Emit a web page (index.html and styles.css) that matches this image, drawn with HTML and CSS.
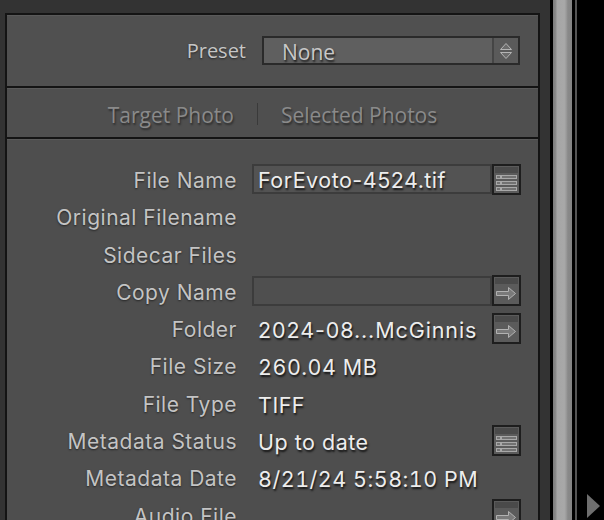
FILE: index.html
```html
<!DOCTYPE html>
<html>
<head>
<meta charset="utf-8">
<link rel="stylesheet" href="styles.css">
</head>
<body>
<div class="screen">
  <div class="main">
    <div class="panel">
      <div class="sec sec-preset">
        <span class="preset-label">Preset</span>
        <div class="dropdown">
          <span class="dd-text">None</span>
          <span class="dd-spin">
            <svg width="24" height="25" viewBox="0 0 24 25">
              <polygon points="12,5.5 6.5,11.5 17.5,11.5" fill="#6c6c6c" stroke="#b4b4b4" stroke-width="1"/>
              <polygon points="6.5,14.5 17.5,14.5 12,20.5" fill="#6c6c6c" stroke="#b4b4b4" stroke-width="1"/>
            </svg>
          </span>
        </div>
      </div>
      <div class="sec sec-target">
        <span class="tgt">Target Photo</span>
        <span class="vsep"></span>
        <span class="tgt">Selected Photos</span>
      </div>
      <div class="sec sec-meta">
        <div class="grid">
          <span class="lbl">File Name</span>
          <span class="val box">ForEvoto-4524.tif</span>
          <span class="btn">
            <svg width="25" height="27" viewBox="0 0 25 27">
              <rect x="1" y="1" width="23" height="6" fill="#4a4a4a"/>
              <rect x="2.5" y="9.5" width="4" height="3" fill="#727272" stroke="#a8a8a8"/>
              <rect x="7.5" y="9.5" width="15" height="3" fill="#727272" stroke="#a8a8a8"/>
              <rect x="2.5" y="15.5" width="4" height="3" fill="#727272" stroke="#a8a8a8"/>
              <rect x="7.5" y="15.5" width="15" height="3" fill="#727272" stroke="#a8a8a8"/>
              <rect x="2.5" y="21.5" width="4" height="3" fill="#727272" stroke="#a8a8a8"/>
              <rect x="7.5" y="21.5" width="15" height="3" fill="#727272" stroke="#a8a8a8"/>
            </svg>
          </span>

          <span class="lbl">Original Filename</span>
          <span class="val"></span>
          <span class="nobtn"></span>

          <span class="lbl">Sidecar Files</span>
          <span class="val"></span>
          <span class="nobtn"></span>

          <span class="lbl">Copy Name</span>
          <span class="val box empty"></span>
          <span class="btn">
            <svg width="25" height="27" viewBox="0 0 25 27">
              <rect x="1" y="1" width="23" height="6" fill="#4a4a4a"/>
              <polygon points="2.5,14.5 14.5,14.5 14.5,10.5 21.5,16.5 14.5,22.5 14.5,18.5 2.5,18.5" fill="#7a7a7a" stroke="#b2b2b2"/>
            </svg>
          </span>

          <span class="lbl">Folder</span>
          <span class="val wide">2024-08...McGinnis</span>
          <span class="btn">
            <svg width="25" height="27" viewBox="0 0 25 27">
              <rect x="1" y="1" width="23" height="6" fill="#4a4a4a"/>
              <polygon points="2.5,14.5 14.5,14.5 14.5,10.5 21.5,16.5 14.5,22.5 14.5,18.5 2.5,18.5" fill="#7a7a7a" stroke="#b2b2b2"/>
            </svg>
          </span>

          <span class="lbl">File Size</span>
          <span class="val num">260.04 MB</span>
          <span class="nobtn"></span>

          <span class="lbl">File Type</span>
          <span class="val">TIFF</span>
          <span class="nobtn"></span>

          <span class="lbl">Metadata Status</span>
          <span class="val">Up to date</span>
          <span class="btn">
            <svg width="25" height="27" viewBox="0 0 25 27">
              <rect x="1" y="1" width="23" height="6" fill="#4a4a4a"/>
              <rect x="2.5" y="9.5" width="4" height="3" fill="#727272" stroke="#a8a8a8"/>
              <rect x="7.5" y="9.5" width="15" height="3" fill="#727272" stroke="#a8a8a8"/>
              <rect x="2.5" y="15.5" width="4" height="3" fill="#727272" stroke="#a8a8a8"/>
              <rect x="7.5" y="15.5" width="15" height="3" fill="#727272" stroke="#a8a8a8"/>
              <rect x="2.5" y="21.5" width="4" height="3" fill="#727272" stroke="#a8a8a8"/>
              <rect x="7.5" y="21.5" width="15" height="3" fill="#727272" stroke="#a8a8a8"/>
            </svg>
          </span>

          <span class="lbl">Metadata Date</span>
          <span class="val num">8/21/24 5:58:10 PM</span>
          <span class="nobtn"></span>

          <span class="lbl">Audio File</span>
          <span class="val"></span>
          <span class="btn">
            <svg width="25" height="27" viewBox="0 0 25 27">
              <rect x="1" y="1" width="23" height="6" fill="#4a4a4a"/>
              <polygon points="2.5,14.5 14.5,14.5 14.5,10.5 21.5,16.5 14.5,22.5 14.5,18.5 2.5,18.5" fill="#7a7a7a" stroke="#b2b2b2"/>
            </svg>
          </span>
        </div>
      </div>
    </div>
  </div>
  <div class="blk1"></div>
  <div class="scroll"></div>
  <div class="blk2"></div>
  <div class="gline"></div>
  <div class="edge">
    <svg class="tri" width="13" height="24" viewBox="0 0 13 24">
      <polygon points="0,0 13,12 0,24" fill="#6e6e6e"/>
    </svg>
  </div>
</div>
</body>
</html>
```
FILE: styles.css
```css
html, body {
  margin: 0;
  padding: 0;
  height: 520px;
  overflow: hidden;
  background: #000;
}

.screen {
  display: flex;
  height: 520px;
}

.main {
  flex: none;
  width: 550px;
  box-sizing: border-box;
  padding: 13px 10px 0 5px;
  background: #333;
}

.panel {
  border: 2px solid #141414;
  border-bottom: none;
  background: #4e4e4e;
  height: 620px;
  box-sizing: border-box;
}

.sec {
  box-shadow: inset 0 1px 0 #5a5a5a;
}

.sec-preset {
  height: 71px;
  border-bottom: 2px solid #141414;
  display: flex;
  align-items: center;
  justify-content: flex-end;
  padding-right: 18px;
  background: #505050;
}

.preset-label {
  font-family: "Open Sans", sans-serif;
  font-size: 20px;
  color: #c6c6c6;
  margin-right: 16px;
  text-shadow: 0 1px 2px rgba(0, 0, 0, 0.55);
}

.dropdown {
  width: 258px;
  height: 29px;
  box-sizing: border-box;
  border: 2px solid #2a2a2a;
  background: #5f5f5f;
  display: flex;
  align-items: stretch;
}

.dd-text {
  flex: 1;
  padding: 2px 0 0 18px;
  font-family: "Open Sans", sans-serif;
  font-size: 21px;
  line-height: 25px;
  color: #c8c8c8;
  text-shadow: 1px 2px 2px rgba(0, 0, 0, 0.7);
}

.dd-spin {
  width: 24px;
  border-left: 2px solid #454545;
  background: #5a5a5a;
  display: flex;
  align-items: center;
  justify-content: center;
}

.sec-target {
  height: 51px;
  box-sizing: border-box;
  padding-top: 5px;
  border-bottom: 2px solid #141414;
  display: flex;
  align-items: center;
  justify-content: center;
  gap: 23px;
  background: #4f4f4f;
}

.tgt {
  font-family: "Open Sans", sans-serif;
  font-size: 21px;
  color: #8a8a8a;
  text-shadow: 1px 2px 2px rgba(0, 0, 0, 0.45);
}

.vsep {
  width: 1px;
  height: 22px;
  background: #3a3a3a;
  margin-top: -3px;
}

.sec-meta {
  padding: 25px 17px 0 0;
  background: #4e4e4e;
}

.grid {
  display: grid;
  grid-template-columns: 245px 240px 29px;
  grid-auto-rows: 30px;
  row-gap: 7.3px;
  align-items: center;
}

.lbl {
  box-sizing: border-box;
  padding: 3px 15px 0 0;
  text-align: right;
  font-family: Inter, sans-serif;
  font-size: 21px;
  letter-spacing: 0.5px;
  color: #c4c4c4;
  text-shadow: 0 1px 2px rgba(0, 0, 0, 0.55);
  white-space: nowrap;
}

.val {
  box-sizing: border-box;
  height: 30px;
  padding: 2px 0 0 6px;
  font-family: Inter, sans-serif;
  font-size: 21.5px;
  line-height: 30px;
  letter-spacing: 0.5px;
  color: #ededed;
  text-shadow: 1px 2px 2px rgba(0, 0, 0, 0.75);
  white-space: nowrap;
}

.val.num {
  font-variant-numeric: tabular-nums;
}

.val.wide {
  letter-spacing: 0.9px;
}

.box {
  border: 2px solid #3c3c3c;
  background: #535353;
  padding: 1px 0 0 4px;
  line-height: 26px;
}

.box.empty {
  background: #4f4f4f;
}

.btn {
  box-sizing: border-box;
  width: 29px;
  height: 31px;
  border: 2px solid #1e1e1e;
  background: #5b5b5b;
  display: flex;
}

.blk1 {
  flex: none;
  width: 3px;
  background: #000;
}

.scroll {
  flex: none;
  width: 19px;
  background: linear-gradient(to right, #7c7c7c 0, #8a8a8a 14%, #a6a6a6 22%, #a8a8a8 60%, #9a9a9a 70%, #898989 78%, #858585 100%);
}

.blk2 {
  flex: none;
  width: 3px;
  background: #000;
}

.gline {
  flex: none;
  width: 2px;
  background: #555;
}

.edge {
  flex: 1;
  background: #000;
  display: flex;
  flex-direction: column;
  justify-content: flex-end;
  padding: 0 0 2px 10px;
}
```
